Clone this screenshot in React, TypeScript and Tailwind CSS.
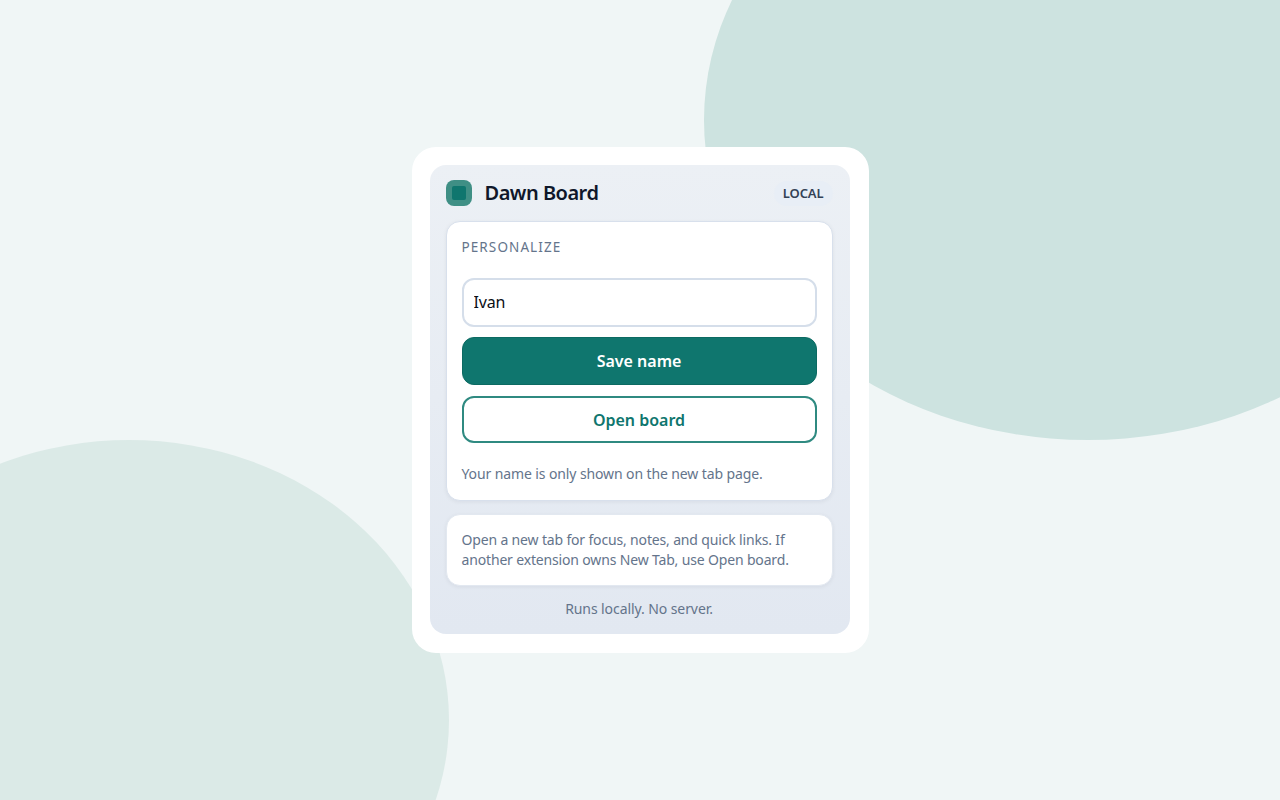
import React from 'react'

const font = "font-['Noto_Sans','Open_Sans',sans-serif]"

export default function App() {
  return (
    <div className={`relative flex h-[800px] w-full items-center justify-center overflow-hidden bg-[#f0f6f6] ${font}`}>
      {/* background blobs */}
      <div className="absolute right-[-192px] top-[-200px] h-[640px] w-[768px] rounded-[50%] bg-[#cde3e0]" />
      <div className="absolute bottom-[-200px] left-[-191px] h-[560px] w-[640px] rounded-[50%] bg-[#dbeae7]" />

      {/* popup frame */}
      <div className="relative h-[506px] w-[457px] rounded-[24px] bg-white py-[18px] pl-[18px] pr-[19px]">
        <div className="flex h-[469px] w-[420px] flex-col rounded-[16px] bg-gradient-to-b from-[#ecf0f5] to-[#e2e8f1] pl-[16px] pr-[17px]">
          {/* Header */}
          <header className="flex h-[56px] shrink-0 items-center justify-between">
            <div className="flex items-center gap-[13px]">
              <div className="flex h-[26px] w-[26px] items-center justify-center rounded-[8px] bg-[#3f8f85]">
                <div className="h-[14px] w-[14px] rounded-[2px] bg-[#0f766e]" />
              </div>
              <h1 className="text-[20px] font-semibold leading-none tracking-[-0.5px] text-[#0f172a]">Dawn Board</h1>
            </div>
            <span className="rounded-full bg-[#e8eef6] px-[9px] py-[4px] text-[13px] font-semibold leading-[17px] tracking-[-0.1px] text-[#334155]">LOCAL</span>
          </header>

          {/* Personalize */}
          <section className="h-[280px] shrink-0 rounded-[14px] border border-[#d8e0ec] bg-white px-[15px] shadow-[0_1px_4px_rgba(15,23,42,0.06)]">
            <h2 className="mt-[15px] text-[13.5px] font-normal leading-[20px] tracking-[1.1px] text-[#64748b]">PERSONALIZE</h2>
            <input
              readOnly
              value="Ivan"
              className="mt-[21px] block h-[49px] w-full rounded-[12px] border-2 border-[#d5deea] bg-white px-[10px] pb-[2px] text-[16px] tracking-[-0.2px] text-[#0b0f14] outline-none"
            />
            <button className="mt-[10px] block h-[48px] w-full rounded-[12px] border border-[#0c6a62] bg-[#0f766e] text-[16px] font-semibold text-white">
              Save name
            </button>
            <button className="mt-[11px] block h-[47px] w-full rounded-[12px] border-2 border-[#2f8a81] bg-white text-[16px] font-semibold text-[#0f766e]">
              Open board
            </button>
            <p className="mt-[21px] text-[14px] leading-[20px] tracking-[-0.11px] text-[#64748b]">Your name is only shown on the new tab page.</p>
          </section>

          {/* Info */}
          <section className="mt-[13px] h-[72px] shrink-0 rounded-[14px] border border-[#e2e8f0] bg-white px-[15px] py-[15px] text-[14px] leading-[20px] tracking-[-0.16px] text-[#64748b] shadow-[0_1px_4px_rgba(15,23,42,0.06)]">
            Open a new tab for focus, notes, and quick links. If another extension owns New Tab, use Open board.
          </section>

          <p className="mt-[13px] text-center text-[14px] leading-[20px] tracking-[-0.08px] text-[#64748b]">Runs locally. No server.</p>
        </div>
      </div>
    </div>
  )
}
